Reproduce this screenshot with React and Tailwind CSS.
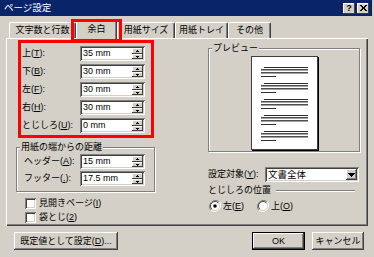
import React from "react";

const sunken =
  "shadow-[inset_1px_1px_0_#808080,inset_-1px_-1px_0_#ffffff,inset_2px_2px_0_#404040,inset_-2px_-2px_0_#d4d0c8]";
const raised =
  "shadow-[inset_-1px_-1px_0_#404040,inset_1px_1px_0_#ffffff,inset_-2px_-2px_0_#808080,inset_2px_2px_0_#d4d0c8]";
const raisedThin = "shadow-[inset_-1px_-1px_0_#404040,inset_1px_1px_0_#ffffff]";
const etched = "border border-[#808080] shadow-[inset_1px_1px_0_#ffffff,1px_1px_0_#ffffff]";

function M({ text }) {
  const i = text.indexOf("(");
  if (i < 0 || i + 1 >= text.length) return <>{text}</>;
  return (
    <>
      {text.slice(0, i + 1)}
      <span className="underline underline-offset-[1px]">{text[i + 1]}</span>
      {text.slice(i + 2)}
    </>
  );
}

function Arrow({ down, w = 3 }) {
  const rows = w === 3 ? [[1, 1], [0, 3]] : [[3, 1], [2, 3], [1, 5], [0, 7]];
  const h = rows.length;
  return (
    <svg width={w} height={h} viewBox={`0 0 ${w} ${h}`} shapeRendering="crispEdges">
      {rows.map(([x, len], i) => (
        <rect key={i} x={x} y={down ? h - 1 - i : i} width={len} height="1" fill="#000" />
      ))}
    </svg>
  );
}

function Spin() {
  return (
    <div className="ml-auto flex flex-col w-[11px] h-[11px]">
      <div className={`${raisedThin} bg-[#d4d0c8] h-[6px] flex items-center justify-center`}>
        <Arrow />
      </div>
      <div className={`${raisedThin} bg-[#d4d0c8] h-[5px] flex items-center justify-center`}>
        <Arrow down />
      </div>
    </div>
  );
}

function Field({ value }) {
  return (
    <div className={`${sunken} bg-white h-[15px] w-[65px] flex items-center pl-[3px] pr-[2px]`}>
      <span>{value}</span>
      <Spin />
    </div>
  );
}

function Row({ label, value, lw }) {
  return (
    <div className="flex items-center h-[15px]">
      <span className={lw}>
        <M text={label} />
      </span>
      <Field value={value} />
    </div>
  );
}

function Tab({ w, active, children }) {
  if (active) {
    return (
      <div
        className={`${w} h-[19px] -mb-[1px] relative z-10 bg-[#d4d0c8] border-t border-l border-white border-r border-r-[#404040] rounded-t-[2px] shadow-[inset_-1px_0_0_#808080] flex items-center justify-center pb-[2px]`}
      >
        {children}
      </div>
    );
  }
  return (
    <div
      className={`${w} h-[16px] border-t border-l border-white border-r border-r-[#404040] rounded-t-[2px] shadow-[inset_-1px_0_0_#808080] flex items-center justify-center`}
    >
      {children}
    </div>
  );
}

function Checkbox({ label }) {
  return (
    <div className="flex items-center h-[11px]">
      <div className={`${sunken} bg-white w-[11px] h-[11px]`} />
      <span className="ml-[3px]">
        <M text={label} />
      </span>
    </div>
  );
}

function Radio({ checked }) {
  return (
    <svg width="12" height="12" viewBox="0 0 12 12">
      <path d="M10.2 1.8 A6 6 0 0 0 1.8 10.2" fill="none" stroke="#808080" strokeWidth="1" />
      <path d="M1.8 10.2 A6 6 0 0 0 10.2 1.8" fill="none" stroke="#ffffff" strokeWidth="1" />
      <circle cx="6" cy="6" r="4.5" fill="#ffffff" />
      <path d="M9.2 2.8 A4.5 4.5 0 0 0 2.8 9.2" fill="none" stroke="#404040" strokeWidth="1" />
      <path d="M2.8 9.2 A4.5 4.5 0 0 0 9.2 2.8" fill="none" stroke="#d4d0c8" strokeWidth="1" />
      {checked && <circle cx="6" cy="6" r="1.8" fill="#000" />}
    </svg>
  );
}

function PagePreview() {
  const groups = [0, 1, 2, 3, 4];
  return (
    <div className="w-[67px] h-[94px] bg-white border border-[#404040] shadow-[1px_1px_0_#000]">
      <svg width="65" height="92" viewBox="0 0 65 92" shapeRendering="crispEdges">
        {groups.map((g) => {
          const y = 10 + g * 16;
          return (
            <g key={g}>
              <rect x="12" y={y} width="44" height="1" fill="#303030" />
              <rect x="9" y={y + 2} width="47" height="1" fill="#505050" />
              <rect x="9" y={y + 3} width="47" height="1" fill="#a0a0a0" />
              <rect x="9" y={y + 5} width="47" height="1" fill="#505050" />
              <rect x="9" y={y + 6} width="47" height="1" fill="#a0a0a0" />
              <rect x="9" y={y + 9} width="15" height="1" fill="#303030" />
            </g>
          );
        })}
      </svg>
    </div>
  );
}

function Button({ w, children, isDefault, className = "" }) {
  if (isDefault) {
    return (
      <div className={`${w} h-[18px] border border-black ${className}`}>
        <div className={`${raised} bg-[#d4d0c8] w-full h-full flex items-center justify-center`}>{children}</div>
      </div>
    );
  }
  return (
    <div className={`${w} h-[18px] ${raised} bg-[#d4d0c8] flex items-center justify-center ${className}`}>{children}</div>
  );
}

function CapBtn({ children }) {
  return (
    <div className={`${raisedThin} bg-[#d4d0c8] w-[12px] h-[11px] flex items-center justify-center`}>{children}</div>
  );
}

export default function App() {
  return (
    <div className="relative w-[374px] h-[257px] overflow-hidden bg-[#d4d0c8] text-black font-['Liberation_Sans','Noto_Sans_CJK_JP',sans-serif] text-[9px] leading-none">
      {/* title bar */}
      <div className="h-[16px] w-[372px] bg-[#0a246a] flex items-center pl-[4px] pr-[3px]">
        <span className="text-white text-[9.5px]">ページ設定</span>
        <div className="ml-auto flex gap-[2px]">
          <CapBtn>
            <span className="font-bold text-[9px] leading-none">?</span>
          </CapBtn>
          <CapBtn>
            <svg width="7" height="6" viewBox="0 0 7 6" shapeRendering="crispEdges">
              <path d="M0 0h2v1h-2zM5 0h2v1h-2zM1 1h2v1h-2zM4 1h2v1h-2zM2 2h3v2h-3zM1 4h2v1h-2zM4 4h2v1h-2zM0 5h2v1h-2zM5 5h2v1h-2z" fill="#000" />
            </svg>
          </CapBtn>
        </div>
      </div>

      <div className="pl-[6px] pt-[4px]">
        {/* tabs */}
        <div className="flex items-end h-[18px] pl-[3px]">
          <Tab w="w-[67px]">文字数と行数</Tab>
          <Tab w="w-[41px]" active>
            余白
          </Tab>
          <Tab w="w-[58px]">用紙サイズ</Tab>
          <Tab w="w-[53px]">用紙トレイ</Tab>
          <Tab w="w-[43px]">その他</Tab>
        </div>

        {/* panel */}
        <div className="w-[362px] h-[188px] flex shadow-[inset_1px_1px_0_#ffffff,inset_-1px_-1px_0_#404040,inset_-2px_-2px_0_#808080]">
          {/* left column */}
          <div className="w-[202px] flex flex-col">
            <div className="ml-[12px] mt-[2px] w-[136px] h-[98px] border-[3px] border-[#ff0000] flex flex-col gap-[3px] pt-[3px] pl-[1px]">
              <Row label="上(T):" value="35 mm" lw="w-[58px]" />
              <Row label="下(B):" value="30 mm" lw="w-[58px]" />
              <Row label="左(F):" value="30 mm" lw="w-[58px]" />
              <Row label="右(H):" value="30 mm" lw="w-[58px]" />
              <Row label="とじしろ(U):" value="0 mm" lw="w-[58px]" />
            </div>

            <div className={`relative ml-[10px] mt-[9px] w-[139px] h-[45px] ${etched} flex flex-col gap-[2px] pt-[6px] pl-[7px]`}>
              <span className="absolute -top-[5px] left-[3px] px-[1px] bg-[#d4d0c8]">用紙の端からの距離</span>
              <Row label="ヘッダー(A):" value="15 mm" lw="w-[56px]" />
              <Row label="フッター(.):" value="17.5 mm" lw="w-[56px]" />
            </div>

            <div className="ml-[19px] mt-[6px] flex flex-col gap-[3px]">
              <Checkbox label="見開きページ(I)" />
              <Checkbox label="袋とじ(2)" />
            </div>
          </div>

          {/* right column */}
          <div className="w-[152px] flex flex-col">
            <div className={`relative mt-[10px] h-[104px] w-[152px] ${etched} pl-[42px] pt-[7px]`}>
              <span className="absolute -top-[5px] left-[3px] px-[1px] bg-[#d4d0c8]">プレビュー</span>
              <PagePreview />
            </div>

            <div className="mt-[15px] flex items-center h-[15px]">
              <span className="w-[57px]">
                <M text="設定対象(Y):" />
              </span>
              <div className={`${sunken} bg-white h-[15px] w-[94px] flex items-center pl-[3px] pr-[2px]`}>
                <span className="text-[9.5px]">文書全体</span>
                <div className={`${raised} bg-[#d4d0c8] ml-auto w-[11px] h-[11px] flex items-center justify-center`}>
                  <Arrow down w={7} />
                </div>
              </div>
            </div>

            <div className="mt-[2px] flex items-center h-[12px]">
              <span>とじしろの位置</span>
              <div className="ml-[5px] w-[79px] h-[1px] bg-[#808080] shadow-[0_1px_0_#ffffff]" />
            </div>

            <div className="mt-[4px] flex items-center h-[12px] pl-[1px]">
              <Radio checked />
              <span className="ml-[2px] w-[34px]">
                <M text="左(E)" />
              </span>
              <Radio />
              <span className="ml-[2px]">
                <M text="上(O)" />
              </span>
            </div>
          </div>
        </div>
      </div>

      {/* bottom buttons */}
      <div className="mt-[6px] flex pl-[14px]">
        <Button w="w-[104px]">
          <M text="既定値として設定(D)..." />
        </Button>
        <Button w="w-[53px]" isDefault className="ml-[134px]">
          OK
        </Button>
        <Button w="w-[52px]" className="ml-[7px]">
          キャンセル
        </Button>
      </div>

      {/* red annotation around active tab */}
      <div className="absolute left-[71px] top-[19px] w-[51px] h-[23px] border-[3px] border-[#ff0000] z-20" />
    </div>
  );
}
